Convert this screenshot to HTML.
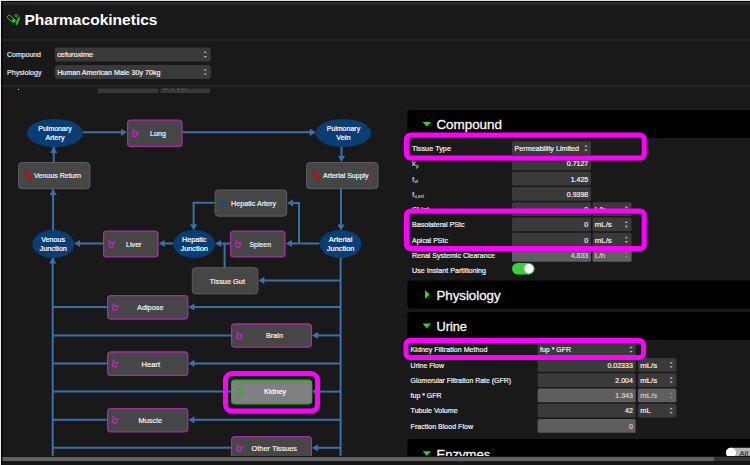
<!DOCTYPE html>
<html><head><meta charset="utf-8"><title>Pharmacokinetics</title>
<style>
html,body{margin:0;padding:0;background:#191919;}
body{width:750px;height:465px;overflow:hidden;font-family:"Liberation Sans", sans-serif;}
svg{display:block;font-family:"Liberation Sans", sans-serif;}
</style></head><body>
<svg width="750" height="465" viewBox="0 0 750 465">
<rect x="0" y="0" width="750" height="465" rx="0" fill="#191919"/>
<rect x="0" y="0" width="750" height="5" rx="0" fill="#282828"/>
<rect x="0" y="0" width="750" height="1" rx="0" fill="#dcdcdc"/>
<rect x="0" y="1" width="750" height="1" rx="0" fill="#000"/>
<rect x="0" y="0" width="1.2" height="465" rx="0" fill="#e8e8e8"/>
<rect x="1.2" y="1" width="1.5" height="464" rx="0" fill="#000"/>
<rect x="2" y="39.5" width="748" height="1" rx="0" fill="#303030"/>
<rect x="2" y="85.5" width="748" height="1" rx="0" fill="#303030"/>
<g stroke="#20d020" fill="none" stroke-width="0.9"><rect x="-4.6" y="-1.7" width="9.2" height="3.4" rx="1.7" transform="translate(11.3,18.8) rotate(38)"/><circle cx="16.3" cy="15.6" r="1.3"/></g><circle cx="13.6" cy="20.6" r="1.7" fill="#20d020"/><ellipse cx="0" cy="0" rx="4.6" ry="1.0" fill="#20d020" transform="translate(17.8,20.8) rotate(-67)"/>
<text x="24.5" y="25.2" font-size="15.4" fill="#ffffff" text-anchor="start" textLength="133" lengthAdjust="spacingAndGlyphs" font-weight="bold">Pharmacokinetics</text>
<text x="7" y="57.2" font-size="7.8" fill="#e6e6e6" text-anchor="start" textLength="34" lengthAdjust="spacingAndGlyphs" stroke="#e6e6e6" stroke-width="0.22">Compound</text>
<text x="7" y="74.8" font-size="7.8" fill="#e6e6e6" text-anchor="start" textLength="34.5" lengthAdjust="spacingAndGlyphs" stroke="#e6e6e6" stroke-width="0.22">Physiology</text>
<rect x="55" y="47.5" width="155.6" height="14" rx="2" fill="#3a3a3a"/>
<rect x="55" y="65" width="155.6" height="14" rx="2" fill="#3a3a3a"/>
<text x="57.2" y="57.2" font-size="7.8" fill="#f0f0f0" text-anchor="start" textLength="36" lengthAdjust="spacingAndGlyphs" stroke="#f0f0f0" stroke-width="0.22">cefuroxime</text>
<text x="57.2" y="74.8" font-size="7.8" fill="#f0f0f0" text-anchor="start" textLength="103.4" lengthAdjust="spacingAndGlyphs" stroke="#f0f0f0" stroke-width="0.22">Human American Male 30y 70kg</text>
<path d="M203.70000000000002 53.1 L205.3 51.3 L206.9 53.1Z M203.70000000000002 55.9 L205.3 57.7 L206.9 55.9Z" fill="#bdbdbd"/>
<path d="M203.70000000000002 70.6 L205.3 68.8 L206.9 70.6Z M203.70000000000002 73.4 L205.3 75.2 L206.9 73.4Z" fill="#bdbdbd"/>
<rect x="98" y="88.5" width="60.5" height="4.5" rx="0" fill="#383838"/>
<rect x="160.5" y="88.5" width="49.5" height="4.5" rx="0" fill="#383838"/>
<rect x="18" y="89" width="1" height="1" rx="0" fill="#e0e0e0"/>
<rect x="12" y="110" width="1" height="1" rx="0" fill="#701010"/>
<rect x="163.5" y="88.6" width="1" height="0.9" rx="0" fill="#a0a0a0"/>
<rect x="166" y="88.6" width="1" height="0.9" rx="0" fill="#a0a0a0"/>
<rect x="172" y="88.6" width="1" height="0.9" rx="0" fill="#a0a0a0"/>
<rect x="178" y="88.6" width="1" height="0.9" rx="0" fill="#a0a0a0"/>
<rect x="182" y="88.6" width="1" height="0.9" rx="0" fill="#a0a0a0"/>
<rect x="185" y="88.6" width="1" height="0.9" rx="0" fill="#a0a0a0"/>
<path d="M52.7 457 L52.7 258" fill="none" stroke="#3971a7" stroke-width="2"/>
<path d="M53.1 230 L53.1 189" fill="none" stroke="#3971a7" stroke-width="2"/>
<path d="M53.7 162 L53.7 147" fill="none" stroke="#3971a7" stroke-width="2"/>
<polygon points="52.7,257.5 49.1,263.5 56.300000000000004,263.5" fill="#3971a7"/>
<polygon points="53.1,189 49.5,195 56.7,195" fill="#3971a7"/>
<polygon points="53.7,147 50.1,153 57.300000000000004,153" fill="#3971a7"/>
<path d="M83 132.3 L123 132.3" fill="none" stroke="#3971a7" stroke-width="2"/>
<polygon points="127,132.3 121,128.70000000000002 121,135.9" fill="#3971a7"/>
<path d="M182.5 132.3 L311 132.3" fill="none" stroke="#3971a7" stroke-width="2"/>
<polygon points="315.8,132.3 309.8,128.70000000000002 309.8,135.9" fill="#3971a7"/>
<path d="M341.5 147 L341.5 158" fill="none" stroke="#3971a7" stroke-width="2"/>
<polygon points="341.5,162 337.9,156 345.1,156" fill="#3971a7"/>
<path d="M341 189 L341 226" fill="none" stroke="#3971a7" stroke-width="2"/>
<polygon points="341,230.5 337.4,224.5 344.6,224.5" fill="#3971a7"/>
<path d="M340.6 258 L340.6 457" fill="none" stroke="#3971a7" stroke-width="2"/>
<path d="M319.5 243.5 L290 243.5" fill="none" stroke="#3971a7" stroke-width="2"/>
<polygon points="285.8,243.5 291.8,239.9 291.8,247.1" fill="#3971a7"/>
<path d="M299 243.5 L299 203 L291 203" fill="none" stroke="#3971a7" stroke-width="2"/>
<polygon points="287,203 293,199.4 293,206.6" fill="#3971a7"/>
<path d="M230 243.5 L219 243.5" fill="none" stroke="#3971a7" stroke-width="2"/>
<polygon points="215,243.5 221,239.9 221,247.1" fill="#3971a7"/>
<path d="M224.6 267 L224.6 243.5" fill="none" stroke="#3971a7" stroke-width="2"/>
<path d="M214.6 202.8 L193.6 202.8 L193.6 226" fill="none" stroke="#3971a7" stroke-width="2"/>
<polygon points="193.6,230.3 190.0,224.3 197.2,224.3" fill="#3971a7"/>
<path d="M173.5 243.5 L163 243.5" fill="none" stroke="#3971a7" stroke-width="2"/>
<polygon points="158.6,243.5 164.6,239.9 164.6,247.1" fill="#3971a7"/>
<path d="M103 243.5 L78 243.5" fill="none" stroke="#3971a7" stroke-width="2"/>
<polygon points="74,243.5 80,239.9 80,247.1" fill="#3971a7"/>
<path d="M341 280.4 L262 280.4" fill="none" stroke="#3971a7" stroke-width="2"/>
<polygon points="258.4,280.4 264.4,276.79999999999995 264.4,284.0" fill="#3971a7"/>
<path d="M341 307 L192.4 307" fill="none" stroke="#3971a7" stroke-width="2"/>
<polygon points="188.4,307 194.4,303.4 194.4,310.6" fill="#3971a7"/>
<path d="M107 307 L52.7 307" fill="none" stroke="#3971a7" stroke-width="2"/>
<path d="M341 335.4 L316 335.4" fill="none" stroke="#3971a7" stroke-width="2"/>
<polygon points="312,335.4 318,331.79999999999995 318,339.0" fill="#3971a7"/>
<path d="M231 335.4 L52.7 335.4" fill="none" stroke="#3971a7" stroke-width="2"/>
<path d="M341 363.4 L192.4 363.4" fill="none" stroke="#3971a7" stroke-width="2"/>
<polygon points="188.4,363.4 194.4,359.79999999999995 194.4,367.0" fill="#3971a7"/>
<path d="M107 363.4 L52.7 363.4" fill="none" stroke="#3971a7" stroke-width="2"/>
<path d="M341 391.6 L316 391.6" fill="none" stroke="#3971a7" stroke-width="2"/>
<polygon points="312,391.6 318,388.0 318,395.20000000000005" fill="#3971a7"/>
<path d="M231 391.6 L52.7 391.6" fill="none" stroke="#3971a7" stroke-width="2"/>
<path d="M341 419.8 L192.4 419.8" fill="none" stroke="#3971a7" stroke-width="2"/>
<polygon points="188.4,419.8 194.4,416.2 194.4,423.40000000000003" fill="#3971a7"/>
<path d="M107 419.8 L52.7 419.8" fill="none" stroke="#3971a7" stroke-width="2"/>
<path d="M341 447.8 L316 447.8" fill="none" stroke="#3971a7" stroke-width="2"/>
<polygon points="312,447.8 318,444.2 318,451.40000000000003" fill="#3971a7"/>
<path d="M231 447.8 L52.7 447.8" fill="none" stroke="#3971a7" stroke-width="2"/>
<ellipse cx="55" cy="133" rx="28" ry="14" fill="#083d76"/>
<text x="55" y="131.4" font-size="7.8" fill="#ffffff" text-anchor="middle" textLength="33.5" lengthAdjust="spacingAndGlyphs" stroke="#ffffff" stroke-width="0.22">Pulmonary</text>
<text x="55" y="139.8" font-size="7.8" fill="#ffffff" text-anchor="middle" textLength="19" lengthAdjust="spacingAndGlyphs" stroke="#ffffff" stroke-width="0.22">Artery</text>
<ellipse cx="343.4" cy="133" rx="27.8" ry="14" fill="#083d76"/>
<text x="343.4" y="131.4" font-size="7.8" fill="#ffffff" text-anchor="middle" textLength="33.5" lengthAdjust="spacingAndGlyphs" stroke="#ffffff" stroke-width="0.22">Pulmonary</text>
<text x="343.4" y="139.8" font-size="7.8" fill="#ffffff" text-anchor="middle" textLength="14.5" lengthAdjust="spacingAndGlyphs" stroke="#ffffff" stroke-width="0.22">Vein</text>
<ellipse cx="53.2" cy="244" rx="20.8" ry="14" fill="#083d76"/>
<text x="53.2" y="242.4" font-size="7.8" fill="#ffffff" text-anchor="middle" textLength="24" lengthAdjust="spacingAndGlyphs" stroke="#ffffff" stroke-width="0.22">Venous</text>
<text x="53.2" y="250.8" font-size="7.8" fill="#ffffff" text-anchor="middle" textLength="27.5" lengthAdjust="spacingAndGlyphs" stroke="#ffffff" stroke-width="0.22">Junction</text>
<ellipse cx="194.2" cy="244" rx="20.8" ry="14" fill="#083d76"/>
<text x="194.2" y="242.4" font-size="7.8" fill="#ffffff" text-anchor="middle" textLength="24.5" lengthAdjust="spacingAndGlyphs" stroke="#ffffff" stroke-width="0.22">Hepatic</text>
<text x="194.2" y="250.8" font-size="7.8" fill="#ffffff" text-anchor="middle" textLength="27.5" lengthAdjust="spacingAndGlyphs" stroke="#ffffff" stroke-width="0.22">Junction</text>
<ellipse cx="340.6" cy="244" rx="21" ry="14" fill="#083d76"/>
<text x="340.6" y="242.4" font-size="7.8" fill="#ffffff" text-anchor="middle" textLength="23.5" lengthAdjust="spacingAndGlyphs" stroke="#ffffff" stroke-width="0.22">Arterial</text>
<text x="340.6" y="250.8" font-size="7.8" fill="#ffffff" text-anchor="middle" textLength="27.5" lengthAdjust="spacingAndGlyphs" stroke="#ffffff" stroke-width="0.22">Junction</text>
<rect x="127.6" y="120.1" width="54.4" height="26.3" rx="3.2" fill="#464646" stroke="#a52ca5" stroke-width="1.3"/>
<g fill="none" stroke="#c225c2" stroke-width="1.2" stroke-linecap="round"><circle cx="134.9" cy="134.15" r="2.25"/><path d="M133.4 130.05 L134.0 131.85 M136.5 132.45000000000002 L138.70000000000002 131.85"/></g><circle cx="133.4" cy="130.05" r="0.9" fill="#c225c2"/>
<text x="150" y="136.05" font-size="7.8" fill="#f0f0f0" text-anchor="start" textLength="16" lengthAdjust="spacingAndGlyphs" stroke="#f0f0f0" stroke-width="0.22">Lung</text>
<rect x="18.5" y="162.5" width="71.4" height="26.2" rx="3.2" fill="#464646" stroke="#5c5c5c" stroke-width="1"/>
<text x="34" y="178.4" font-size="7.8" fill="#f0f0f0" text-anchor="start" textLength="47" lengthAdjust="spacingAndGlyphs" stroke="#f0f0f0" stroke-width="0.22">Venous Return</text>
<rect x="306.5" y="162.5" width="71.6" height="26.2" rx="3.2" fill="#464646" stroke="#5c5c5c" stroke-width="1"/>
<text x="323" y="178.4" font-size="7.8" fill="#f0f0f0" text-anchor="start" textLength="45.6" lengthAdjust="spacingAndGlyphs" stroke="#f0f0f0" stroke-width="0.22">Arterial Supply</text>
<rect x="215.1" y="190.0" width="71.6" height="26.2" rx="3.2" fill="#464646" stroke="#5c5c5c" stroke-width="1"/>
<text x="231" y="205.9" font-size="7.8" fill="#f0f0f0" text-anchor="start" textLength="45" lengthAdjust="spacingAndGlyphs" stroke="#f0f0f0" stroke-width="0.22">Hepatic Artery</text>
<rect x="103.6" y="231.1" width="54.4" height="25.8" rx="3.2" fill="#464646" stroke="#a52ca5" stroke-width="1.3"/>
<g fill="none" stroke="#c225c2" stroke-width="1.2" stroke-linecap="round"><circle cx="110.9" cy="244.9" r="2.25"/><path d="M109.4 240.8 L110.0 242.6 M112.5 243.20000000000002 L114.7 242.6"/></g><circle cx="109.4" cy="240.8" r="0.9" fill="#c225c2"/>
<text x="126" y="246.8" font-size="7.8" fill="#f0f0f0" text-anchor="start" textLength="15.5" lengthAdjust="spacingAndGlyphs" stroke="#f0f0f0" stroke-width="0.22">Liver</text>
<rect x="230.6" y="231.1" width="54.4" height="25.8" rx="3.2" fill="#464646" stroke="#a52ca5" stroke-width="1.3"/>
<g fill="none" stroke="#c225c2" stroke-width="1.2" stroke-linecap="round"><circle cx="237.9" cy="244.9" r="2.25"/><path d="M236.4 240.8 L237.0 242.6 M239.5 243.20000000000002 L241.70000000000002 242.6"/></g><circle cx="236.4" cy="240.8" r="0.9" fill="#c225c2"/>
<text x="249.5" y="246.8" font-size="7.8" fill="#f0f0f0" text-anchor="start" textLength="21.5" lengthAdjust="spacingAndGlyphs" stroke="#f0f0f0" stroke-width="0.22">Spleen</text>
<rect x="192.3" y="267.7" width="65.6" height="26.2" rx="3.2" fill="#464646" stroke="#5c5c5c" stroke-width="1"/>
<text x="209.6" y="283.6" font-size="7.8" fill="#f0f0f0" text-anchor="start" textLength="35.4" lengthAdjust="spacingAndGlyphs" stroke="#f0f0f0" stroke-width="0.22">Tissue Gut</text>
<rect x="107.6" y="295.6" width="80.2" height="23.400000000000002" rx="3.2" fill="#464646" stroke="#a52ca5" stroke-width="1.3"/>
<g fill="none" stroke="#c225c2" stroke-width="1.2" stroke-linecap="round"><circle cx="114.9" cy="308.2" r="2.25"/><path d="M113.4 304.09999999999997 L114.0 305.9 M116.5 306.5 L118.7 305.9"/></g><circle cx="113.4" cy="304.09999999999997" r="0.9" fill="#c225c2"/>
<text x="137" y="310.1" font-size="7.8" fill="#f0f0f0" text-anchor="start" textLength="26.5" lengthAdjust="spacingAndGlyphs" stroke="#f0f0f0" stroke-width="0.22">Adipose</text>
<rect x="231.6" y="324.0" width="79.8" height="23.2" rx="3.2" fill="#464646" stroke="#a52ca5" stroke-width="1.3"/>
<g fill="none" stroke="#c225c2" stroke-width="1.2" stroke-linecap="round"><circle cx="238.9" cy="336.49999999999994" r="2.25"/><path d="M237.4 332.3999999999999 L238.0 334.19999999999993 M240.5 334.79999999999995 L242.70000000000002 334.19999999999993"/></g><circle cx="237.4" cy="332.3999999999999" r="0.9" fill="#c225c2"/>
<text x="266" y="338.4" font-size="7.8" fill="#f0f0f0" text-anchor="start" textLength="17" lengthAdjust="spacingAndGlyphs" stroke="#f0f0f0" stroke-width="0.22">Brain</text>
<rect x="107.6" y="352.0" width="80.2" height="23.400000000000002" rx="3.2" fill="#464646" stroke="#a52ca5" stroke-width="1.3"/>
<g fill="none" stroke="#c225c2" stroke-width="1.2" stroke-linecap="round"><circle cx="114.9" cy="364.59999999999997" r="2.25"/><path d="M113.4 360.49999999999994 L114.0 362.29999999999995 M116.5 362.9 L118.7 362.29999999999995"/></g><circle cx="113.4" cy="360.49999999999994" r="0.9" fill="#c225c2"/>
<text x="141.6" y="366.5" font-size="7.8" fill="#f0f0f0" text-anchor="start" textLength="18.4" lengthAdjust="spacingAndGlyphs" stroke="#f0f0f0" stroke-width="0.22">Heart</text>
<rect x="107.6" y="408.6" width="80.2" height="23.2" rx="3.2" fill="#464646" stroke="#a52ca5" stroke-width="1.3"/>
<g fill="none" stroke="#c225c2" stroke-width="1.2" stroke-linecap="round"><circle cx="114.9" cy="421.09999999999997" r="2.25"/><path d="M113.4 416.99999999999994 L114.0 418.79999999999995 M116.5 419.4 L118.7 418.79999999999995"/></g><circle cx="113.4" cy="416.99999999999994" r="0.9" fill="#c225c2"/>
<text x="138.6" y="423.0" font-size="7.8" fill="#f0f0f0" text-anchor="start" textLength="23.4" lengthAdjust="spacingAndGlyphs" stroke="#f0f0f0" stroke-width="0.22">Muscle</text>
<rect x="231.6" y="436.6" width="79.8" height="23.2" rx="3.2" fill="#464646" stroke="#a52ca5" stroke-width="1.3"/>
<g fill="none" stroke="#c225c2" stroke-width="1.2" stroke-linecap="round"><circle cx="238.9" cy="449.09999999999997" r="2.25"/><path d="M237.4 444.99999999999994 L238.0 446.79999999999995 M240.5 447.4 L242.70000000000002 446.79999999999995"/></g><circle cx="237.4" cy="444.99999999999994" r="0.9" fill="#c225c2"/>
<text x="251.6" y="451.0" font-size="7.8" fill="#f0f0f0" text-anchor="start" textLength="45.4" lengthAdjust="spacingAndGlyphs" stroke="#f0f0f0" stroke-width="0.22">Other Tissues</text>
<path d="M23.3 171.6 Q27.4 172.4 30.6 176 A1.45 1.45 0 1 1 28.6 178.4 Q25.6 175.6 23.3 171.6Z" fill="#e00008"/>
<path d="M311.3 171.6 Q315.4 172.4 318.6 176 A1.45 1.45 0 1 1 316.6 178.4 Q313.6 175.6 311.3 171.6Z" fill="#e00008"/>
<path d="M220 203 L222.8 200.8 L226 203 L222.8 205.2Z" fill="#0b4a9a"/>
<rect x="225.5" y="373.5" width="92" height="37.6" rx="6.5" fill="none" stroke="#ff00ff" stroke-width="5"/>
<rect x="231.6" y="380.2" width="80" height="23.6" rx="3.2" fill="#808080" stroke="#22b422" stroke-width="1.3"/>
<text x="264" y="394.2" font-size="7.8" fill="#ffffff" text-anchor="start" textLength="22" lengthAdjust="spacingAndGlyphs" stroke="#ffffff" stroke-width="0.22">Kidney</text>
<g fill="#22b422"><circle cx="240.2" cy="389.2" r="1.6"/><circle cx="238" cy="393.4" r="1.6"/><circle cx="242.4" cy="393.4" r="1.6"/></g>
<path d="M750 110 L410.4 110 Q407.4 110 407.4 113 L407.4 138 L407.4 138 L750 138Z" fill="#000"/>
<path d="M422.6 122.0 L431 122.0 L426.8 126.60000000000001Z" fill="#22dd22"/>
<text x="436.4" y="129.4" font-size="13.2" fill="#f8f8f8" text-anchor="start" textLength="65.6" lengthAdjust="spacingAndGlyphs" stroke="#f8f8f8" stroke-width="0.3">Compound</text>
<path d="M750 280.4 L410.4 280.4 Q407.4 280.4 407.4 283.4 L407.4 305.4 Q407.4 308.4 410.4 308.4 L750 308.4Z" fill="#000"/>
<path d="M425 290 L429.6 294.5 L425 299Z" fill="#22dd22"/>
<text x="436.4" y="300" font-size="13.2" fill="#f8f8f8" text-anchor="start" textLength="64.2" lengthAdjust="spacingAndGlyphs" stroke="#f8f8f8" stroke-width="0.3">Physiology</text>
<path d="M750 312 L410.4 312 Q407.4 312 407.4 315 L407.4 340 L407.4 340 L750 340Z" fill="#000"/>
<path d="M422.6 323.6 L431 323.6 L426.8 328.2Z" fill="#22dd22"/>
<text x="436.4" y="331" font-size="13.2" fill="#f8f8f8" text-anchor="start" textLength="30.6" lengthAdjust="spacingAndGlyphs" stroke="#f8f8f8" stroke-width="0.3">Urine</text>
<path d="M750 439 L410.4 439 Q407.4 439 407.4 442 L407.4 459 L407.4 459 L750 459Z" fill="#000"/>
<path d="M422.6 451.20000000000005 L431 451.20000000000005 L426.8 455.8Z" fill="#22dd22"/>
<text x="436.4" y="458.6" font-size="13.2" fill="#f8f8f8" text-anchor="start" textLength="54" lengthAdjust="spacingAndGlyphs" stroke="#f8f8f8" stroke-width="0.3">Enzymes</text>
<text x="412" y="151.0" font-size="7.8" fill="#f0f0f0" text-anchor="start" textLength="39" lengthAdjust="spacingAndGlyphs" stroke="#f0f0f0" stroke-width="0.22">Tissue Type</text>
<rect x="512" y="141.29999999999998" width="79" height="13.7" rx="1.5" fill="#3a3a3a"/>
<text x="514.6" y="151.0" font-size="7.8" fill="#f0f0f0" text-anchor="start" textLength="64.4" lengthAdjust="spacingAndGlyphs" stroke="#f0f0f0" stroke-width="0.22">Permeability Limited</text>
<path d="M584.4 146.79999999999998 L586 145.0 L587.6 146.79999999999998Z M584.4 149.6 L586 151.39999999999998 L587.6 149.6Z" fill="#bdbdbd"/>
<text x="412" y="166.25" font-size="7.8" fill="#f0f0f0">k<tspan font-size="4.5" dy="1.6">p</tspan></text>
<rect x="512" y="156.54999999999998" width="79" height="13.7" rx="1.5" fill="#3a3a3a"/>
<text x="566.8000000000001" y="166.25" font-size="7.8" fill="#f0f0f0" text-anchor="start" textLength="21.4" lengthAdjust="spacingAndGlyphs" stroke="#f0f0f0" stroke-width="0.22">0.7127</text>
<text x="412" y="181.5" font-size="7.8" fill="#f0f0f0">f<tspan font-size="4.5" dy="1.6">ut</tspan></text>
<rect x="512" y="171.79999999999998" width="79" height="13.7" rx="1.5" fill="#3a3a3a"/>
<text x="570.7" y="181.5" font-size="7.8" fill="#f0f0f0" text-anchor="start" textLength="17.5" lengthAdjust="spacingAndGlyphs" stroke="#f0f0f0" stroke-width="0.22">1.425</text>
<text x="412" y="196.75" font-size="7.8" fill="#f0f0f0">f<tspan font-size="4.5" dy="1.6">u,ext</tspan></text>
<rect x="512" y="187.04999999999998" width="79" height="13.7" rx="1.5" fill="#3a3a3a"/>
<text x="566.8000000000001" y="196.75" font-size="7.8" fill="#f0f0f0" text-anchor="start" textLength="21.4" lengthAdjust="spacingAndGlyphs" stroke="#f0f0f0" stroke-width="0.22">0.9398</text>
<text x="412" y="212.0" font-size="7.8" fill="#f0f0f0" text-anchor="start" textLength="17" lengthAdjust="spacingAndGlyphs" stroke="#f0f0f0" stroke-width="0.22">CLint</text>
<rect x="512" y="202.29999999999998" width="79" height="13.7" rx="1.5" fill="#3a3a3a"/>
<text x="584.3000000000001" y="212.0" font-size="7.8" fill="#f0f0f0" text-anchor="start" textLength="3.9" lengthAdjust="spacingAndGlyphs" stroke="#f0f0f0" stroke-width="0.22">0</text>
<rect x="592.6" y="202.29999999999998" width="39" height="13.7" rx="1.5" fill="#3a3a3a"/>
<text x="594.8000000000001" y="212.0" font-size="7.8" fill="#f0f0f0" text-anchor="start" textLength="10.5" lengthAdjust="spacingAndGlyphs" stroke="#f0f0f0" stroke-width="0.22">L/h</text>
<path d="M624.8 207.79999999999998 L626.4 206.0 L628.0 207.79999999999998Z M624.8 210.6 L626.4 212.39999999999998 L628.0 210.6Z" fill="#bdbdbd"/>
<text x="412" y="227.25" font-size="7.8" fill="#f0f0f0" text-anchor="start" textLength="52.6" lengthAdjust="spacingAndGlyphs" stroke="#f0f0f0" stroke-width="0.22">Basolateral PStc</text>
<rect x="512" y="217.54999999999998" width="79" height="13.7" rx="1.5" fill="#3a3a3a"/>
<text x="584.3000000000001" y="227.25" font-size="7.8" fill="#f0f0f0" text-anchor="start" textLength="3.9" lengthAdjust="spacingAndGlyphs" stroke="#f0f0f0" stroke-width="0.22">0</text>
<rect x="592.6" y="217.54999999999998" width="39" height="13.7" rx="1.5" fill="#3a3a3a"/>
<text x="594.8000000000001" y="227.25" font-size="7.8" fill="#f0f0f0" text-anchor="start" textLength="17" lengthAdjust="spacingAndGlyphs" stroke="#f0f0f0" stroke-width="0.22">mL/s</text>
<path d="M624.8 223.04999999999998 L626.4 221.25 L628.0 223.04999999999998Z M624.8 225.85 L626.4 227.64999999999998 L628.0 225.85Z" fill="#bdbdbd"/>
<text x="412" y="242.5" font-size="7.8" fill="#f0f0f0" text-anchor="start" textLength="36" lengthAdjust="spacingAndGlyphs" stroke="#f0f0f0" stroke-width="0.22">Apical PStc</text>
<rect x="512" y="232.79999999999998" width="79" height="13.7" rx="1.5" fill="#3a3a3a"/>
<text x="584.3000000000001" y="242.5" font-size="7.8" fill="#f0f0f0" text-anchor="start" textLength="3.9" lengthAdjust="spacingAndGlyphs" stroke="#f0f0f0" stroke-width="0.22">0</text>
<rect x="592.6" y="232.79999999999998" width="39" height="13.7" rx="1.5" fill="#3a3a3a"/>
<text x="594.8000000000001" y="242.5" font-size="7.8" fill="#f0f0f0" text-anchor="start" textLength="17" lengthAdjust="spacingAndGlyphs" stroke="#f0f0f0" stroke-width="0.22">mL/s</text>
<path d="M624.8 238.29999999999998 L626.4 236.5 L628.0 238.29999999999998Z M624.8 241.1 L626.4 242.89999999999998 L628.0 241.1Z" fill="#bdbdbd"/>
<text x="412" y="257.75" font-size="7.8" fill="#f0f0f0" text-anchor="start" textLength="83" lengthAdjust="spacingAndGlyphs" stroke="#f0f0f0" stroke-width="0.22">Renal Systemic Clearance</text>
<rect x="512" y="248.04999999999998" width="79" height="13.7" rx="1.5" fill="#5e5e5e"/>
<text x="570.7" y="257.75" font-size="7.8" fill="#d4d4d4" text-anchor="start" textLength="17.5" lengthAdjust="spacingAndGlyphs" stroke="#d4d4d4" stroke-width="0.22">4.833</text>
<rect x="592.6" y="248.04999999999998" width="39" height="13.7" rx="1.5" fill="#606060"/>
<text x="594.8000000000001" y="257.75" font-size="7.8" fill="#cccccc" text-anchor="start" textLength="10.5" lengthAdjust="spacingAndGlyphs" stroke="#cccccc" stroke-width="0.22">L/h</text>
<path d="M624.8 253.54999999999998 L626.4 251.75 L628.0 253.54999999999998Z M624.8 256.34999999999997 L626.4 258.15 L628.0 256.34999999999997Z" fill="#8a8a8a"/>
<text x="412" y="273.0" font-size="7.8" fill="#f0f0f0" text-anchor="start" textLength="74" lengthAdjust="spacingAndGlyphs" stroke="#f0f0f0" stroke-width="0.22">Use Instant Partitioning</text>
<rect x="512" y="263" width="22.6" height="11.4" rx="5.7" fill="#3bcf3b"/>
<circle cx="528.8" cy="268.7" r="4.7" fill="#ffffff"/>
<text x="410.6" y="352.40000000000003" font-size="7.8" fill="#f0f0f0" text-anchor="start" textLength="76.8" lengthAdjust="spacingAndGlyphs" stroke="#f0f0f0" stroke-width="0.22">Kidney Filtration Method</text>
<rect x="537.6" y="343.1" width="98" height="12.4" rx="1.5" fill="#3a3a3a"/>
<text x="540" y="352.40000000000003" font-size="7.8" fill="#f0f0f0" text-anchor="start" textLength="31" lengthAdjust="spacingAndGlyphs" stroke="#f0f0f0" stroke-width="0.22">fup * GFR</text>
<path d="M629.4 348.20000000000005 L631 346.40000000000003 L632.6 348.20000000000005Z M629.4 351.0 L631 352.8 L632.6 351.0Z" fill="#bdbdbd"/>
<text x="410.6" y="367.65000000000003" font-size="7.8" fill="#f0f0f0" text-anchor="start" textLength="33.4" lengthAdjust="spacingAndGlyphs" stroke="#f0f0f0" stroke-width="0.22">Urine Flow</text>
<rect x="537.6" y="357.95000000000005" width="98" height="13.7" rx="1.5" fill="#3a3a3a"/>
<text x="607.5000000000001" y="367.65000000000003" font-size="7.8" fill="#f0f0f0" text-anchor="start" textLength="25.3" lengthAdjust="spacingAndGlyphs" stroke="#f0f0f0" stroke-width="0.22">0.02333</text>
<rect x="638" y="357.95000000000005" width="38.4" height="13.7" rx="1.5" fill="#3a3a3a"/>
<text x="640.2" y="367.65000000000003" font-size="7.8" fill="#f0f0f0" text-anchor="start" textLength="17" lengthAdjust="spacingAndGlyphs" stroke="#f0f0f0" stroke-width="0.22">mL/s</text>
<path d="M669.5999999999999 363.45000000000005 L671.1999999999999 361.65000000000003 L672.8 363.45000000000005Z M669.5999999999999 366.25 L671.1999999999999 368.05 L672.8 366.25Z" fill="#bdbdbd"/>
<text x="410.6" y="382.90000000000003" font-size="7.8" fill="#f0f0f0" text-anchor="start" textLength="100.4" lengthAdjust="spacingAndGlyphs" stroke="#f0f0f0" stroke-width="0.22">Glomerular Filtration Rate (GFR)</text>
<rect x="537.6" y="373.20000000000005" width="98" height="13.7" rx="1.5" fill="#3a3a3a"/>
<text x="615.3000000000001" y="382.90000000000003" font-size="7.8" fill="#f0f0f0" text-anchor="start" textLength="17.5" lengthAdjust="spacingAndGlyphs" stroke="#f0f0f0" stroke-width="0.22">2.004</text>
<rect x="638" y="373.20000000000005" width="38.4" height="13.7" rx="1.5" fill="#3a3a3a"/>
<text x="640.2" y="382.90000000000003" font-size="7.8" fill="#f0f0f0" text-anchor="start" textLength="17" lengthAdjust="spacingAndGlyphs" stroke="#f0f0f0" stroke-width="0.22">mL/s</text>
<path d="M669.5999999999999 378.70000000000005 L671.1999999999999 376.90000000000003 L672.8 378.70000000000005Z M669.5999999999999 381.5 L671.1999999999999 383.3 L672.8 381.5Z" fill="#bdbdbd"/>
<text x="410.6" y="398.15000000000003" font-size="7.8" fill="#f0f0f0" text-anchor="start" textLength="31" lengthAdjust="spacingAndGlyphs" stroke="#f0f0f0" stroke-width="0.22">fup * GFR</text>
<rect x="537.6" y="388.45000000000005" width="98" height="13.7" rx="1.5" fill="#5e5e5e"/>
<text x="615.3000000000001" y="398.15000000000003" font-size="7.8" fill="#d4d4d4" text-anchor="start" textLength="17.5" lengthAdjust="spacingAndGlyphs" stroke="#d4d4d4" stroke-width="0.22">1.343</text>
<rect x="638" y="388.45000000000005" width="38.4" height="13.7" rx="1.5" fill="#606060"/>
<text x="640.2" y="398.15000000000003" font-size="7.8" fill="#cccccc" text-anchor="start" textLength="17" lengthAdjust="spacingAndGlyphs" stroke="#cccccc" stroke-width="0.22">mL/s</text>
<path d="M669.5999999999999 393.95000000000005 L671.1999999999999 392.15000000000003 L672.8 393.95000000000005Z M669.5999999999999 396.75 L671.1999999999999 398.55 L672.8 396.75Z" fill="#8a8a8a"/>
<text x="410.6" y="413.40000000000003" font-size="7.8" fill="#f0f0f0" text-anchor="start" textLength="47" lengthAdjust="spacingAndGlyphs" stroke="#f0f0f0" stroke-width="0.22">Tubule Volume</text>
<rect x="537.6" y="403.70000000000005" width="98" height="13.7" rx="1.5" fill="#3a3a3a"/>
<text x="625.0000000000001" y="413.40000000000003" font-size="7.8" fill="#f0f0f0" text-anchor="start" textLength="7.8" lengthAdjust="spacingAndGlyphs" stroke="#f0f0f0" stroke-width="0.22">42</text>
<rect x="638" y="403.70000000000005" width="38.4" height="13.7" rx="1.5" fill="#3a3a3a"/>
<text x="640.2" y="413.40000000000003" font-size="7.8" fill="#f0f0f0" text-anchor="start" textLength="10.4" lengthAdjust="spacingAndGlyphs" stroke="#f0f0f0" stroke-width="0.22">mL</text>
<path d="M669.5999999999999 409.20000000000005 L671.1999999999999 407.40000000000003 L672.8 409.20000000000005Z M669.5999999999999 412.0 L671.1999999999999 413.8 L672.8 412.0Z" fill="#bdbdbd"/>
<text x="410.6" y="428.65000000000003" font-size="7.8" fill="#f0f0f0" text-anchor="start" textLength="62.4" lengthAdjust="spacingAndGlyphs" stroke="#f0f0f0" stroke-width="0.22">Fraction Blood Flow</text>
<rect x="537.6" y="418.95000000000005" width="98" height="13.7" rx="1.5" fill="#5e5e5e"/>
<text x="628.9000000000001" y="428.65000000000003" font-size="7.8" fill="#d4d4d4" text-anchor="start" textLength="3.9" lengthAdjust="spacingAndGlyphs" stroke="#d4d4d4" stroke-width="0.22">0</text>
<rect x="406.5" y="135" width="237.7" height="23" rx="4" fill="none" stroke="#ff00ff" stroke-width="5"/>
<rect x="406.5" y="211" width="237.7" height="37.5" rx="4" fill="none" stroke="#ff00ff" stroke-width="5"/>
<rect x="406" y="340.5" width="237.5" height="17" rx="4" fill="none" stroke="#ff00ff" stroke-width="5"/>
<rect x="726" y="447.8" width="30" height="10" rx="5" fill="#b6b6b6"/>
<circle cx="731" cy="452.8" r="5" fill="#ffffff"/>
<text x="739.6" y="456.2" font-size="8" fill="#333" text-anchor="start" textLength="8.6" lengthAdjust="spacingAndGlyphs" stroke="#333" stroke-width="0.22">All</text>
<rect x="2.7" y="456" width="748" height="1" rx="0" fill="#141414"/>
<rect x="2.7" y="457" width="748" height="4.2" rx="0" fill="#343434"/>
<rect x="2.7" y="457" width="711.6" height="4.2" rx="2" fill="#626262"/>
<rect x="2.7" y="457" width="10" height="4.2" rx="0" fill="#626262"/>
<rect x="2.7" y="461.2" width="748" height="3.8" rx="0" fill="#161616"/>
</svg>
</body></html>
